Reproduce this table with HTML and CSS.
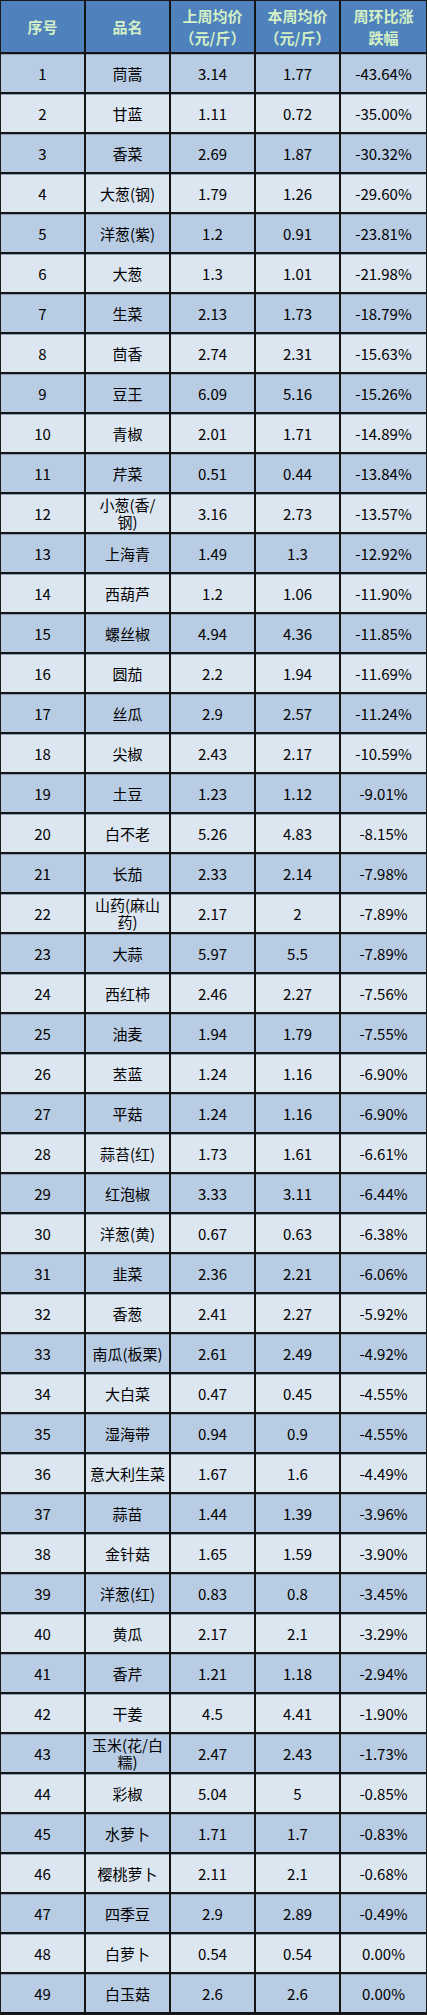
FILE: index.html
```html
<!DOCTYPE html>
<html lang="zh-CN">
<head>
<meta charset="utf-8">
<title>蔬菜价格周环比</title>
<link rel="stylesheet" href="styles.css">
</head>
<body>
<table class="price-table">
<thead>
<tr><th>序号</th><th>品名</th><th><span class="hline">上周均价</span><span class="hline">（元/斤）</span></th><th><span class="hline">本周均价</span><span class="hline">（元/斤）</span></th><th><span class="hline">周环比涨</span><span class="hline">跌幅</span></th></tr>
</thead>
<tbody>
<tr><td>1</td><td>茼蒿</td><td>3.14</td><td>1.77</td><td>-43.64%</td></tr>
<tr><td>2</td><td>甘蓝</td><td>1.11</td><td>0.72</td><td>-35.00%</td></tr>
<tr><td>3</td><td>香菜</td><td>2.69</td><td>1.87</td><td>-30.32%</td></tr>
<tr><td>4</td><td>大葱(钢)</td><td>1.79</td><td>1.26</td><td>-29.60%</td></tr>
<tr><td>5</td><td>洋葱(紫)</td><td>1.2</td><td>0.91</td><td>-23.81%</td></tr>
<tr><td>6</td><td>大葱</td><td>1.3</td><td>1.01</td><td>-21.98%</td></tr>
<tr><td>7</td><td>生菜</td><td>2.13</td><td>1.73</td><td>-18.79%</td></tr>
<tr><td>8</td><td>茴香</td><td>2.74</td><td>2.31</td><td>-15.63%</td></tr>
<tr><td>9</td><td>豆王</td><td>6.09</td><td>5.16</td><td>-15.26%</td></tr>
<tr><td>10</td><td>青椒</td><td>2.01</td><td>1.71</td><td>-14.89%</td></tr>
<tr><td>11</td><td>芹菜</td><td>0.51</td><td>0.44</td><td>-13.84%</td></tr>
<tr><td>12</td><td class="wrap">小葱(香/<br>钢)</td><td>3.16</td><td>2.73</td><td>-13.57%</td></tr>
<tr><td>13</td><td>上海青</td><td>1.49</td><td>1.3</td><td>-12.92%</td></tr>
<tr><td>14</td><td>西葫芦</td><td>1.2</td><td>1.06</td><td>-11.90%</td></tr>
<tr><td>15</td><td>螺丝椒</td><td>4.94</td><td>4.36</td><td>-11.85%</td></tr>
<tr><td>16</td><td>圆茄</td><td>2.2</td><td>1.94</td><td>-11.69%</td></tr>
<tr><td>17</td><td>丝瓜</td><td>2.9</td><td>2.57</td><td>-11.24%</td></tr>
<tr><td>18</td><td>尖椒</td><td>2.43</td><td>2.17</td><td>-10.59%</td></tr>
<tr><td>19</td><td>土豆</td><td>1.23</td><td>1.12</td><td>-9.01%</td></tr>
<tr><td>20</td><td>白不老</td><td>5.26</td><td>4.83</td><td>-8.15%</td></tr>
<tr><td>21</td><td>长茄</td><td>2.33</td><td>2.14</td><td>-7.98%</td></tr>
<tr><td>22</td><td class="wrap">山药(麻山<br>药)</td><td>2.17</td><td>2</td><td>-7.89%</td></tr>
<tr><td>23</td><td>大蒜</td><td>5.97</td><td>5.5</td><td>-7.89%</td></tr>
<tr><td>24</td><td>西红柿</td><td>2.46</td><td>2.27</td><td>-7.56%</td></tr>
<tr><td>25</td><td>油麦</td><td>1.94</td><td>1.79</td><td>-7.55%</td></tr>
<tr><td>26</td><td>苤蓝</td><td>1.24</td><td>1.16</td><td>-6.90%</td></tr>
<tr><td>27</td><td>平菇</td><td>1.24</td><td>1.16</td><td>-6.90%</td></tr>
<tr><td>28</td><td>蒜苔(红)</td><td>1.73</td><td>1.61</td><td>-6.61%</td></tr>
<tr><td>29</td><td>红泡椒</td><td>3.33</td><td>3.11</td><td>-6.44%</td></tr>
<tr><td>30</td><td>洋葱(黄)</td><td>0.67</td><td>0.63</td><td>-6.38%</td></tr>
<tr><td>31</td><td>韭菜</td><td>2.36</td><td>2.21</td><td>-6.06%</td></tr>
<tr><td>32</td><td>香葱</td><td>2.41</td><td>2.27</td><td>-5.92%</td></tr>
<tr><td>33</td><td>南瓜(板栗)</td><td>2.61</td><td>2.49</td><td>-4.92%</td></tr>
<tr><td>34</td><td>大白菜</td><td>0.47</td><td>0.45</td><td>-4.55%</td></tr>
<tr><td>35</td><td>湿海带</td><td>0.94</td><td>0.9</td><td>-4.55%</td></tr>
<tr><td>36</td><td>意大利生菜</td><td>1.67</td><td>1.6</td><td>-4.49%</td></tr>
<tr><td>37</td><td>蒜苗</td><td>1.44</td><td>1.39</td><td>-3.96%</td></tr>
<tr><td>38</td><td>金针菇</td><td>1.65</td><td>1.59</td><td>-3.90%</td></tr>
<tr><td>39</td><td>洋葱(红)</td><td>0.83</td><td>0.8</td><td>-3.45%</td></tr>
<tr><td>40</td><td>黄瓜</td><td>2.17</td><td>2.1</td><td>-3.29%</td></tr>
<tr><td>41</td><td>香芹</td><td>1.21</td><td>1.18</td><td>-2.94%</td></tr>
<tr><td>42</td><td>干姜</td><td>4.5</td><td>4.41</td><td>-1.90%</td></tr>
<tr><td>43</td><td class="wrap">玉米(花/白<br>糯)</td><td>2.47</td><td>2.43</td><td>-1.73%</td></tr>
<tr><td>44</td><td>彩椒</td><td>5.04</td><td>5</td><td>-0.85%</td></tr>
<tr><td>45</td><td>水萝卜</td><td>1.71</td><td>1.7</td><td>-0.83%</td></tr>
<tr><td>46</td><td>樱桃萝卜</td><td>2.11</td><td>2.1</td><td>-0.68%</td></tr>
<tr><td>47</td><td>四季豆</td><td>2.9</td><td>2.89</td><td>-0.49%</td></tr>
<tr><td>48</td><td>白萝卜</td><td>0.54</td><td>0.54</td><td>0.00%</td></tr>
<tr><td>49</td><td>白玉菇</td><td>2.6</td><td>2.6</td><td>0.00%</td></tr>
</tbody>
</table>
</body>
</html>
```
FILE: styles.css
```css
html, body {
  margin: 0;
  padding: 0;
  background: #ffffff;
}

.price-table {
  width: 427px;
  border-collapse: separate;
  border-spacing: 0;
  table-layout: fixed;
  border: 1px solid #1a1a1a;
  font-family: "Noto Sans CJK SC", "Noto Sans", sans-serif;
  color: #000000;
}

.price-table th,
.price-table td {
  box-sizing: border-box;
  width: 85px;
  padding: 0 1px;
  text-align: center;
  vertical-align: middle;
  border-right: 2px solid #141414;
  border-bottom: 2px solid #141414;
  white-space: nowrap;
}

.price-table th:last-child,
.price-table td:last-child {
  border-right: none;
}

.price-table th {
  height: 53px;
  background: #4f81bd;
  color: #d3f0c6;
  font-size: 15px;
  font-weight: bold;
  line-height: 22px;
}

.price-table th .hline {
  display: block;
  line-height: 22px;
}

.price-table td {
  height: 40px;
  font-size: 15px;
  line-height: 17px;
  box-shadow: inset 0 1px 0 #8f9fb3;
}

.price-table tbody tr:nth-child(odd) td {
  background: #b8cce4;
}

.price-table tbody tr:nth-child(even) td {
  background: #dce6f1;
}

.price-table td.wrap {
  white-space: normal;
  line-height: 17px;
}
```
